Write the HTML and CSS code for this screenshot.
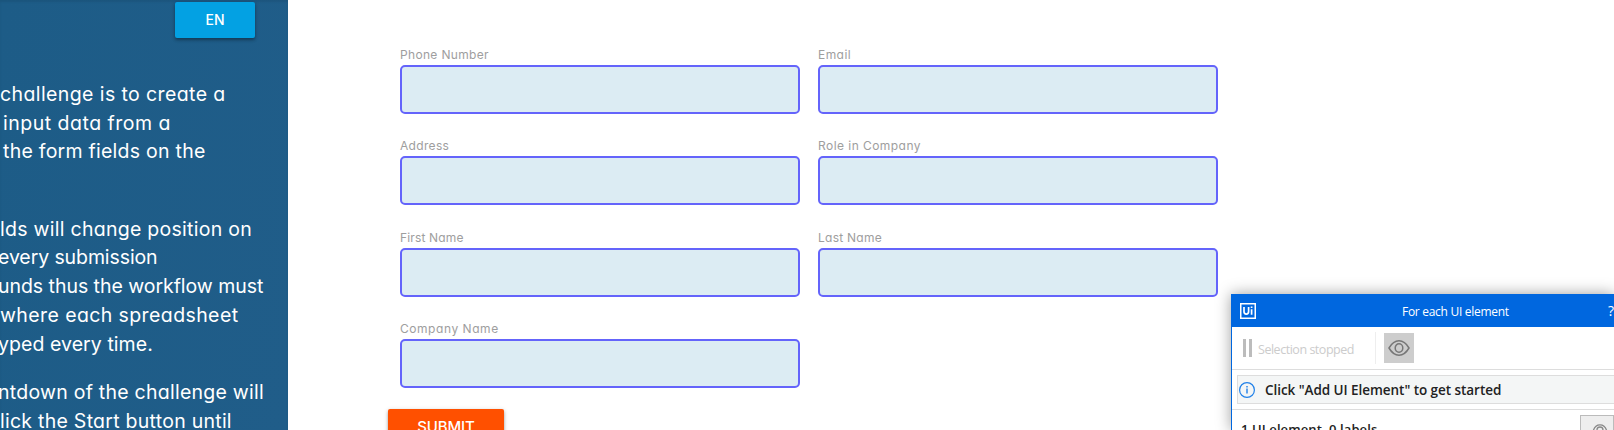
FILE: index.html
```
<!DOCTYPE html>
<html lang="en">
<head>
<meta charset="utf-8">
<title>Challenge</title>
<link rel="stylesheet" href="styles.css">
</head>
<body>
<div class="page">
  <aside class="sidebar">
    <button class="btn lang">EN</button>
    <div class="copy">
      <p><span class="l1">challenge is to create a</span><span class="l2">input data from a</span><span class="l3">the form fields on the</span></p>
      <p class="second"><span class="l4">lds will change position on</span><span class="l5">every submission</span><span class="l6">unds thus the workflow must</span><span class="l7">where each spreadsheet</span><span class="l8">yped every time.</span></p>
      <p class="third"><span class="l9">ntdown of the challenge will</span><span class="l10">lick the Start button until</span></p>
    </div>
  </aside>
  <main class="main">
    <form class="form">
      <label class="field"><span class="f1">Phone Number</span><input type="text"></label>
      <label class="field"><span class="f2">Email</span><input type="text"></label>
      <label class="field"><span class="f3">Address</span><input type="text"></label>
      <label class="field"><span class="f4">Role in Company</span><input type="text"></label>
      <label class="field"><span class="f5">First Name</span><input type="text"></label>
      <label class="field"><span class="f6">Last Name</span><input type="text"></label>
      <label class="field"><span class="f7">Company Name</span><input type="text"></label>
    </form>
    <button class="btn submit">SUBMIT</button>
  </main>
</div>
<section class="dialog">
  <header class="titlebar">
    <svg class="logo" width="16" height="16" viewBox="0 0 16 16"><rect x="0.750" y="0.750" width="14.500" height="14.500" fill="none" stroke="#fff" stroke-width="1.5"/><path d="M4 4v4.6q0 2.6 2.3 2.6t2.3-2.6V4M11.6 6.3v5.4M11.6 3.4v1.7" fill="none" stroke="#fff" stroke-width="1.7"/></svg>
    <span class="title">For each UI element</span>
    <span class="help">?</span>
  </header>
  <div class="toolbar">
    <span class="pause"></span>
    <span class="status">Selection stopped</span>
    <span class="divider"></span>
    <span class="eye"><svg width="22" height="16" viewBox="0 0 22 16" fill="none" stroke="#777" stroke-width="1.5"><path d="M1 8Q5.200 .8 11 .8T21 8Q16.800 15.200 11 15.200T1 8Z"/><ellipse cx="11" cy="8" rx="3.8" ry="4.200"/></svg></span>
  </div>
  <div class="hint">
    <div class="hintbox">
      <svg width="16" height="16" viewBox="0 0 16 16" fill="none" stroke="#2080e8"><circle cx="8" cy="8" r="7.400" stroke-width="1.2"/><path d="M8 6.500v5M8 4v1.500" stroke-width="1.400"/></svg>
      <span>Click "Add UI Element" to get started</span>
    </div>
  </div>
  <div class="summary">
    <span class="count">1 UI element, 0 labels</span>
    <span class="eyebtn"><svg width="16" height="16" viewBox="0 0 16 16" fill="none" stroke="#888" stroke-width="1.300"><path d="M1 8Q2.500 .8 8 .8T15 8Q12 14 8 14T1 8Z"/><circle cx="8" cy="6" r="3"/></svg></span>
  </div>
</section>
</body>
</html>
```
FILE: styles.css
```
* { box-sizing: border-box; }
body { margin: 0; width: 1614px; height: 430px; overflow: hidden; background: #fff; font-family: Inter, sans-serif; font-feature-settings: "cv11"; }
.page { display: flex; height: 430px; overflow: hidden; }
.btn { display: block; padding: 0; border: 0; border-radius: 2px; color: #fff; font-family: Inter, sans-serif; box-shadow: 0 2px 3px rgba(0,0,0,.28), 0 1px 5px rgba(0,0,0,.16); }
.sidebar { flex: none; width: 288px; height: 430px; overflow: hidden; padding-top: 2px; background: linear-gradient(100deg, #1d5c87, #205d89); box-shadow: inset 0 2px 2px rgba(0,0,0,.08); color: #fff; }
.lang { width: 80px; height: 36px; margin-left: 175px; padding-bottom: 2px; background: #03a1e3; font-size: 14px; font-weight: 500; }
.copy { padding-top: 42px; font-size: 19.500px; line-height: 28.700px; white-space: nowrap; }
.copy p { margin: 0; }
.copy span { display: block; }
.copy .second { margin-top: 48.600px; }
.copy .third { margin-top: 20px; }
.l1 { letter-spacing: .4px; }
.l2 { margin-left: 3px; letter-spacing: .5px; }
.l3 { margin-left: 3px; letter-spacing: .25px; }
.l4 { letter-spacing: .27px; }
.l5 { margin-left: -2px; letter-spacing: -.1px; }
.l6 { margin-left: -2px; letter-spacing: -.04px; }
.l7 { letter-spacing: .4px; }
.l8 { margin-left: -2px; letter-spacing: .06px; }
.l9 { margin-left: -2px; letter-spacing: .25px; }
.l10 { letter-spacing: .26px; }
.main { padding: 46px 0 0 100px; flex: 1; }
.form { display: grid; grid-template-columns: 400px 400px; column-gap: 18px; grid-auto-rows: 91.400px; margin-left: 12px; }
.field { display: flex; flex-direction: column; font-size: 12px; line-height: 17px; color: #9e9e9e; }
.field span { height: 19px; }
.f1, .f3 { letter-spacing: .33px; }
.f2, .f4 { letter-spacing: .45px; }
.f5 { letter-spacing: .15px; }
.f6 { letter-spacing: .25px; }
.f7 { letter-spacing: .55px; }
.field input { width: 400px; height: 49px; padding: 0 10px; border: 2px solid #6464fb; border-radius: 5px; background: #dcecf3; outline: 0; }
.submit { width: 116px; height: 36px; margin-top: -3px; background: #ff5000; font-size: 15px; font-weight: 500; letter-spacing: -.1px; }
.dialog { position: absolute; left: 1231px; top: 294px; width: 383px; height: 136px; border-left: 1px solid #0067df; background: #fff; box-shadow: 0 0 14px rgba(0,0,0,.38); font-family: "Open Sans", sans-serif; }
.titlebar { display: flex; align-items: center; height: 33px; background: #0067df; color: #fff; font-size: 12px; white-space: nowrap; margin-left: -1px; padding-left: 9px; }
.title { margin-left: 146px; width: 208px; padding-top: 2px; letter-spacing: -.29px; }
.logo { flex: none; }
.help { font-size: 14px; }
.toolbar { display: flex; align-items: center; height: 43px; border-bottom: 1px solid #ddd; padding-left: 11px; }
.pause { width: 9px; height: 18px; border: solid #bcbcbc; border-width: 0 3px; }
.status { width: 117px; margin-left: 6px; padding-top: 2px; color: #ccc; font-size: 12.500px; letter-spacing: -.47px; white-space: nowrap; }
.divider { width: 1px; height: 32px; background: #eee; }
.eye { display: flex; align-items: center; justify-content: center; width: 30px; height: 30px; margin-left: 8px; background: #cdcdcd; }
.hint { height: 40px; padding: 5px 0 0 5px; border-bottom: 1px solid #ddd; }
.hintbox { display: flex; align-items: center; gap: 10px; height: 29px; padding-left: 1px; border: 1px solid #ddd; border-right: 0; background: #f4f6f6; color: #222; font-size: 13.500px; font-weight: 600; letter-spacing: -.05px; white-space: nowrap; }
.summary { display: flex; justify-content: space-between; height: 20px; overflow: hidden; padding: 5px 0 0 9px; color: #222; font-size: 13px; font-weight: 600; letter-spacing: .1px; }
.count { padding-top: 5px; line-height: 18px; }
.eyebtn { flex: none; width: 34px; height: 30px; padding: 8px 0 0 11px; border: 1px solid #bbb; background: #eee; }
```
